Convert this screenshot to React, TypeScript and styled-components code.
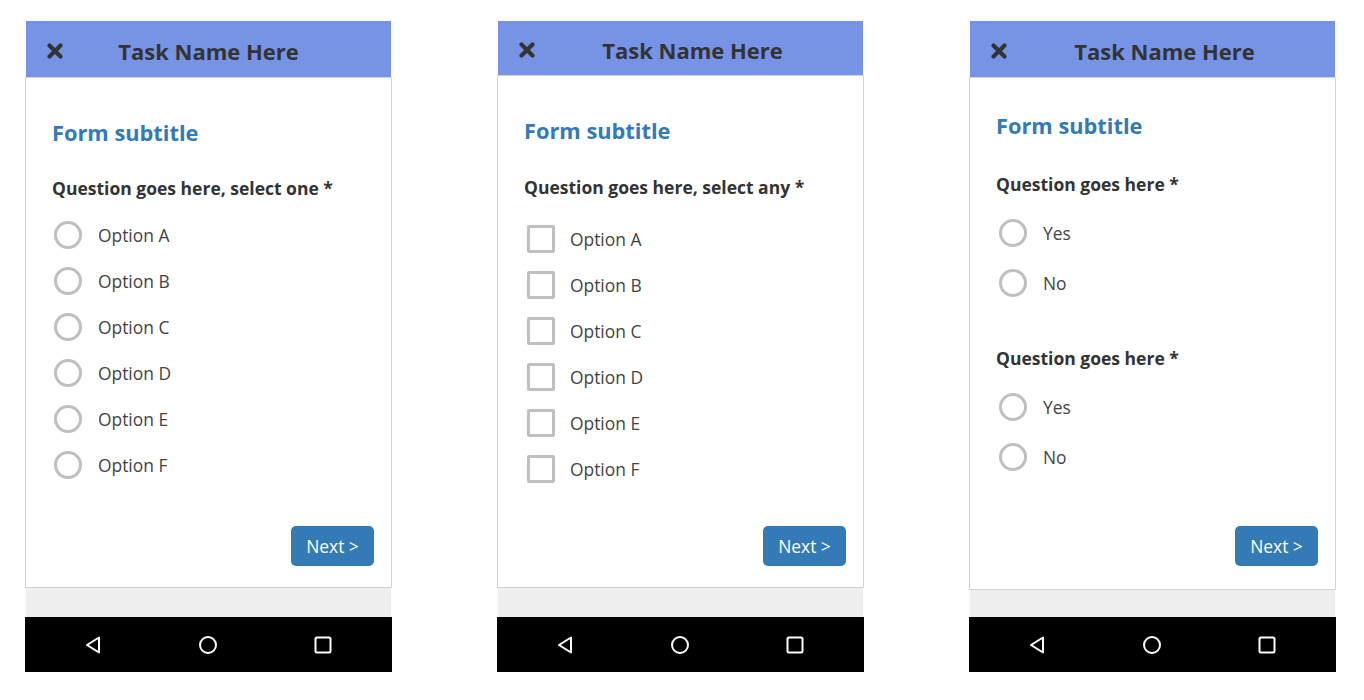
import React from "react";
import styled, { createGlobalStyle } from "styled-components";

const Global = createGlobalStyle`
  html, body { margin: 0; padding: 0; background: #fff; }
  body { font-family: "Open Sans", "Noto Sans", sans-serif; }
`;

const Page = styled.div`
  display: flex;
  gap: 105px;
  padding: 21px 0 0 25px;
`;

const Phone = styled.div`
  width: 367px;
  display: flex;
  flex-direction: column;
`;

const Header = styled.div<{ $h: number; $shift: number }>`
  height: ${(p) => p.$h}px;
  box-sizing: border-box;
  margin: 0 1px;
  background: #7793e6;
  display: flex;
  align-items: center;
  justify-content: center;
  position: relative;
  color: #333;
  font-weight: 700;
  font-size: 22px;
  padding-top: 3px;
  padding-left: ${(p) => p.$shift * 2}px;
`;

const Close = styled.svg`
  position: absolute;
  left: 21px;
  top: calc(50% + 2px);
  transform: translateY(-50%);
`;

const Card = styled.div<{ $h: number; $pt: number; $pb: number }>`
  height: ${(p) => p.$h}px;
  box-sizing: border-box;
  background: #fff;
  border: 1px solid #d2d2d2;
  padding: ${(p) => p.$pt}px 17px ${(p) => p.$pb}px 26px;
  display: flex;
  flex-direction: column;
`;

const Subtitle = styled.div`
  color: #337ab7;
  font-weight: 700;
  font-size: 21.8px;
  line-height: 28px;
`;

const Question = styled.div<{ $mt: number }>`
  margin-top: ${(p) => p.$mt}px;
  color: #333;
  font-weight: 700;
  font-size: 17.5px;
  line-height: 24px;
`;

const Options = styled.div<{ $mt: number }>`
  margin-top: ${(p) => p.$mt}px;
  display: flex;
  flex-direction: column;
`;

const Row = styled.div<{ $h: number }>`
  height: ${(p) => p.$h}px;
  display: flex;
  align-items: center;
  color: #444;
  font-size: 17.4px;
`;

const Radio = styled.span<{ $ml: number }>`
  width: 28px;
  height: 28px;
  box-sizing: border-box;
  border: 3px solid #bfbfbf;
  border-radius: 50%;
  margin: 0 16px 0 ${(p) => p.$ml}px;
  flex: none;
`;

const Check = styled.span`
  width: 28px;
  height: 28px;
  box-sizing: border-box;
  border: 3px solid #bfbfbf;
  border-radius: 2px;
  margin: 0 15px 0 3px;
  flex: none;
`;

const Next = styled.button`
  margin-top: auto;
  align-self: flex-end;
  width: 83px;
  height: 40px;
  border: none;
  border-radius: 5px;
  background: #337ab7;
  color: #fff;
  font-family: "Open Sans", sans-serif;
  font-size: 17.4px;
  padding: 0;
`;

const Gray = styled.div`
  flex: 1;
  margin: 0 1px;
  background: #eeeeee;
`;

const Nav = styled.div`
  height: 55px;
  background: #000;
  display: grid;
  grid-template-columns: 1fr 1fr 1fr;
  align-items: center;
  justify-items: center;
  padding: 0 12px;
`;

const Bottom = styled.div<{ $gray: number }>`
  height: ${(p) => p.$gray + 55}px;
  display: flex;
  flex-direction: column;
`;

const XIcon = () => (
  <Close width="16" height="16" viewBox="0 0 16 16">
    <path d="M2.5 2.5 L13.5 13.5 M13.5 2.5 L2.5 13.5" stroke="#333" strokeWidth="4.2" strokeLinecap="round" />
  </Close>
);

const NavBar = () => (
  <Nav>
    <svg width="20" height="20" viewBox="0 0 20 20">
      <path d="M15 2.5 L15 17.5 L3 10 Z" fill="none" stroke="#fff" strokeWidth="2" strokeLinejoin="round" />
    </svg>
    <svg width="20" height="20" viewBox="0 0 20 20">
      <circle cx="10" cy="10" r="8" fill="none" stroke="#fff" strokeWidth="2" />
    </svg>
    <svg width="20" height="20" viewBox="0 0 20 20">
      <rect x="2.5" y="2.5" width="15" height="15" rx="1.5" fill="none" stroke="#fff" strokeWidth="2" />
    </svg>
  </Nav>
);

const letters = ["A", "B", "C", "D", "E", "F"];

export default function App() {
  return (
    <>
      <Global />
      <Page>
        <Phone>
          <Header $h={56} $shift={0}>
            <XIcon />
            Task Name Here
          </Header>
          <Card $h={511} $pt={41} $pb={21}>
            <Subtitle>Form subtitle</Subtitle>
            <Question $mt={29}>Question goes here, select one *</Question>
            <Options $mt={12}>
              {letters.map((l) => (
                <Row key={l} $h={46}>
                  <Radio $ml={2} />
                  Option {l}
                </Row>
              ))}
            </Options>
            <Next>Next &gt;</Next>
          </Card>
          <Bottom $gray={29}>
            <Gray />
            <NavBar />
          </Bottom>
        </Phone>

        <Phone>
          <Header $h={54} $shift={12}>
            <XIcon />
            Task Name Here
          </Header>
          <Card $h={513} $pt={41} $pb={21}>
            <Subtitle>Form subtitle</Subtitle>
            <Question $mt={30}>Question goes here, select any *</Question>
            <Options $mt={17}>
              {letters.map((l) => (
                <Row key={l} $h={46}>
                  <Check />
                  Option {l}
                </Row>
              ))}
            </Options>
            <Next>Next &gt;</Next>
          </Card>
          <Bottom $gray={29}>
            <Gray />
            <NavBar />
          </Bottom>
        </Phone>

        <Phone>
          <Header $h={56} $shift={12}>
            <XIcon />
            Task Name Here
          </Header>
          <Card $h={513} $pt={34} $pb={23}>
            <Subtitle>Form subtitle</Subtitle>
            <Question $mt={32}>Question goes here *</Question>
            <Options $mt={12}>
              <Row $h={50}>
                <Radio $ml={3} />
                Yes
              </Row>
              <Row $h={50}>
                <Radio $ml={3} />
                No
              </Row>
            </Options>
            <Question $mt={38}>Question goes here *</Question>
            <Options $mt={12}>
              <Row $h={50}>
                <Radio $ml={3} />
                Yes
              </Row>
              <Row $h={49}>
                <Radio $ml={3} />
                No
              </Row>
            </Options>
            <Next>Next &gt;</Next>
          </Card>
          <Bottom $gray={27}>
            <Gray />
            <NavBar />
          </Bottom>
        </Phone>
      </Page>
    </>
  );
}
